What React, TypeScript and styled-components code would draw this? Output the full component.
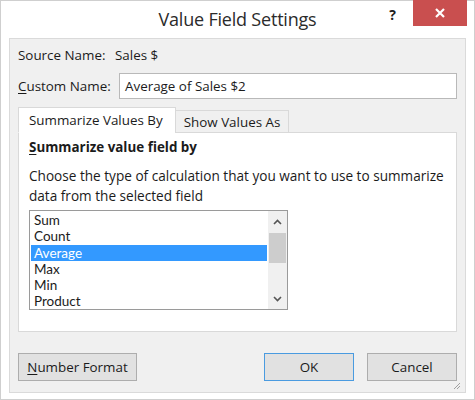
import React from 'react';
import styled, { createGlobalStyle } from 'styled-components';

const GlobalStyle = createGlobalStyle`
  html, body {
    margin: 0;
    padding: 0;
    background: #ffffff;
  }
  body {
    font-family: 'Open Sans', 'Noto Sans', 'Liberation Sans', sans-serif;
    font-size: 13.4px;
    color: #1b1b1b;
  }
`;

const Window = styled.div`
  width: 475px;
  height: 400px;
  box-sizing: border-box;
  border: 1px solid #cfcfcf;
  background: #ffffff;
  display: flex;
  flex-direction: column;
`;

const TitleBar = styled.div`
  height: 37px;
  display: grid;
  grid-template-columns: 1fr auto 1fr;
  align-items: start;
`;

const Title = styled.div`
  font-size: 18px;
  line-height: 37px;
  color: #2b2b2b;
  letter-spacing: -0.2px;
`;

const WindowControls = styled.div`
  display: flex;
  justify-content: flex-end;
  align-items: flex-start;
  padding-right: 7px;
`;

const HelpButton = styled.div`
  font-weight: 700;
  font-size: 14px;
  line-height: 14px;
  margin-top: 7px;
  margin-right: 17px;
  color: #202020;
`;

const CloseButton = styled.div`
  width: 54px;
  height: 26px;
  margin-top: -1px;
  background: #c94f4f;
  display: flex;
  align-items: center;
  justify-content: center;
`;

const Panel = styled.div`
  flex: 1;
  margin: 0 8px 6px;
  background: #f0f0f0;
  border: 1px solid #dadada;
  padding: 7px 8px 10px;
  display: flex;
  flex-direction: column;
`;

const FieldRow = styled.div<{ $gap?: number }>`
  display: flex;
  align-items: center;
  margin-bottom: ${p => p.$gap ?? 0}px;
`;

const Label = styled.div<{ $width: number }>`
  width: ${p => p.$width}px;
  flex-shrink: 0;
  line-height: 18px;
`;

const Value = styled.div`
  line-height: 18px;
`;

const TextInput = styled.div`
  flex: 1;
  height: 26px;
  box-sizing: border-box;
  border: 1px solid #b9b9b9;
  background: #ffffff;
  padding: 0 5px;
  line-height: 24px;
`;

const Accel = styled.span`
  text-decoration: underline;
  text-underline-offset: 2px;
`;

const TabStrip = styled.div`
  display: flex;
  align-items: flex-end;
  height: 25px;
  margin-bottom: -1px;
  position: relative;
  z-index: 1;
`;

const Tab = styled.div<{ $active?: boolean }>`
  box-sizing: border-box;
  height: ${p => (p.$active ? 26 : 23)}px;
  padding: ${p => (p.$active ? '0 12px 0 10px' : '0 8px')};
  border: 1px solid #d9d9d9;
  border-bottom-color: ${p => (p.$active ? '#ffffff' : '#d9d9d9')};
  background: ${p => (p.$active ? '#ffffff' : '#f0f0f0')};
  line-height: 22px;
  margin-left: ${p => (p.$active ? 0 : -1)}px;
  display: flex;
  align-items: center;
`;

const TabPanel = styled.div`
  height: 200px;
  box-sizing: border-box;
  border: 1px solid #d9d9d9;
  background: #ffffff;
  padding: 5px 10px;
`;

const SectionHeading = styled.div`
  font-weight: 700;
  line-height: 18px;
  margin-bottom: 10px;
`;

const Description = styled.div`
  font-size: 13.6px;
  line-height: 20px;
  margin-bottom: 4px;
  white-space: nowrap;
`;

const ListBox = styled.div`
  width: 259px;
  height: 100px;
  box-sizing: border-box;
  border: 1px solid #9a9a9a;
  display: flex;
  background: #ffffff;
`;

const ListItems = styled.div`
  flex: 1;
  padding: 1px 1px 0 1px;
  overflow: hidden;
`;

const ListItem = styled.div<{ $selected?: boolean }>`
  height: 16.3px;
  line-height: 16px;
  padding-left: 3px;
  font-family: Lato, 'Open Sans', sans-serif;
  font-size: 13.5px;
  background: ${p => (p.$selected ? '#3399ff' : 'transparent')};
  color: ${p => (p.$selected ? '#ffffff' : '#1b1b1b')};
`;

const ScrollBar = styled.div`
  width: 19px;
  background: #f0f0f0;
  display: flex;
  flex-direction: column;
  align-items: center;
`;

const ScrollArrow = styled.div`
  height: 21px;
  width: 100%;
  display: flex;
  align-items: center;
  justify-content: center;
`;

const ScrollTrack = styled.div`
  flex: 1;
  width: 100%;
  display: flex;
  flex-direction: column;
`;

const ScrollThumb = styled.div`
  height: 30px;
  margin: 1px 1px 0;
  background: #cdcdcd;
`;

const ButtonRow = styled.div`
  display: flex;
  align-items: center;
  margin-top: 21px;
  position: relative;
`;

const Button = styled.div<{ $width: number; $default?: boolean }>`
  width: ${p => p.$width}px;
  height: 28px;
  box-sizing: border-box;
  border: 1px solid ${p => (p.$default ? '#4a9be0' : '#adadad')};
  background: #e1e1e1;
  display: flex;
  align-items: center;
  justify-content: center;
  margin-left: 13px;
  &:first-child {
    margin-left: 0;
  }
`;

const Spacer = styled.div`
  flex: 1;
`;

const Grip = styled.svg`
  position: absolute;
  right: -4px;
  bottom: -9px;
`;

const items = ['Sum', 'Count', 'Average', 'Max', 'Min', 'Product'];

const Chevron: React.FC<{ up?: boolean }> = ({ up }) => (
  <svg width="9" height="6" viewBox="0 0 9 6">
    <path
      d={up ? 'M1 5 L4.5 1.5 L8 5' : 'M1 1 L4.5 4.5 L8 1'}
      fill="none"
      stroke="#555"
      strokeWidth="1.6"
    />
  </svg>
);

export default function App() {
  return (
    <>
      <GlobalStyle />
      <Window>
        <TitleBar>
          <div />
          <Title>Value Field Settings</Title>
          <WindowControls>
            <HelpButton>?</HelpButton>
            <CloseButton>
              <svg width="12" height="12" viewBox="0 0 12 12">
                <path d="M2 2 L10 10 M10 2 L2 10" stroke="#fff" strokeWidth="2.2" />
              </svg>
            </CloseButton>
          </WindowControls>
        </TitleBar>
        <Panel>
          <FieldRow $gap={9}>
            <Label $width={97}>Source Name:</Label>
            <Value>Sales $</Value>
          </FieldRow>
          <FieldRow $gap={9}>
            <Label $width={101}>
              <Accel>C</Accel>ustom Name:
            </Label>
            <TextInput>Average of Sales $2</TextInput>
          </FieldRow>
          <TabStrip>
            <Tab $active>Summarize Values By</Tab>
            <Tab>Show Values As</Tab>
          </TabStrip>
          <TabPanel>
            <SectionHeading>
              <Accel>S</Accel>ummarize value field by
            </SectionHeading>
            <Description>
              Choose the type of calculation that you want to use to summarize
              <br />
              data from the selected field
            </Description>
            <ListBox>
              <ListItems>
                {items.map(item => (
                  <ListItem key={item} $selected={item === 'Average'}>
                    {item}
                  </ListItem>
                ))}
              </ListItems>
              <ScrollBar>
                <ScrollArrow>
                  <Chevron up />
                </ScrollArrow>
                <ScrollTrack>
                  <ScrollThumb />
                </ScrollTrack>
                <ScrollArrow>
                  <Chevron />
                </ScrollArrow>
              </ScrollBar>
            </ListBox>
          </TabPanel>
          <ButtonRow>
            <Button $width={119}>
              <span>
                <Accel>N</Accel>umber Format
              </span>
            </Button>
            <Spacer />
            <Button $width={90} $default>
              OK
            </Button>
            <Button $width={90}>Cancel</Button>
            <Grip width="9" height="9" viewBox="0 0 9 9">
              <path d="M8 2 L2 8 M8 5 L5 8" stroke="#a0a0a0" strokeWidth="1" />
            </Grip>
          </ButtonRow>
        </Panel>
      </Window>
    </>
  );
}
